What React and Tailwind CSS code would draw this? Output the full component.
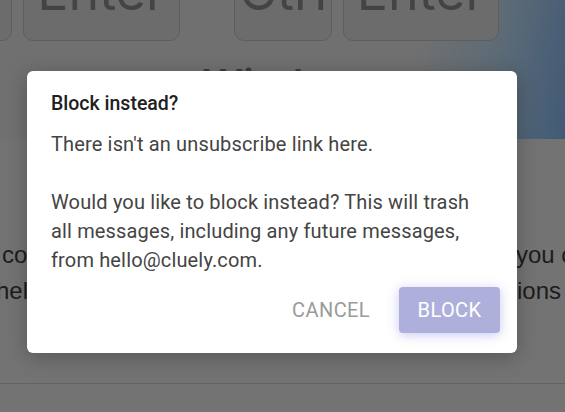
export default function App() {
  const font = { fontFamily: "Roboto, 'Noto Sans', sans-serif" };
  return (
    <div className="relative w-[565px] h-[412px] overflow-hidden bg-[#737373]" style={font}>
      {/* top band with keys */}
      <div className="flex flex-col h-[139px] bg-[linear-gradient(100deg,#707070_0%,#707070_72%,#5d6b76_86%,#415a76_100%)]">
        <div className="flex gap-[11px] -mt-[40px] -ml-[146px]">
          <Key w={158} label="" />
          <Key w={157} label="Enter" />
          <div className="w-[32px]" />
          <Key w={98} label="Ctrl" />
          <Key w={156} label="Enter" />
        </div>
        <div className="mt-[23px] text-center text-[40px] leading-none font-semibold text-[#3c3c3c] pl-[20px]" style={{ fontFamily: "Inter, sans-serif" }}>Windows</div>
      </div>
      {/* middle text */}
      <div className="pt-[98px] text-[24px] leading-[36px] text-[#1c1c1c] whitespace-nowrap" style={{ fontFamily: "'Liberation Sans', Arial, sans-serif" }}>
        <div className="grid grid-cols-[517px_1fr] overflow-hidden">
          <span className="pl-[2px] overflow-hidden">control your inbox</span>
          <span className="-ml-[1px] overflow-hidden">you can</span>
        </div>
        <div className="grid grid-cols-[517px_1fr] overflow-hidden">
          <span className="-ml-[4px] overflow-hidden">help you</span>
          <span className="overflow-hidden">ions</span>
        </div>
      </div>
      <div className="absolute left-0 right-0 top-[383px] h-px bg-[#626262]" />

      {/* dialog */}
      <div className="absolute left-[27px] top-[71px] w-[490px] h-[282px] bg-white rounded-[6px] shadow-[0_4px_20px_rgba(0,0,0,0.25)] flex flex-col pl-[24px] pr-[34px] pt-[20px]">
        <div className="text-[19.5px] leading-[26px] font-medium text-[#202020]">Block instead?</div>
        <div className="mt-[13px] text-[20px] leading-[29px] tracking-[0.15px] text-[#444444]">
          There isn't an unsubscribe link here.
          <br />
          <br />
          Would you like to block instead? This will trash all messages, including any future messages, from hello@cluely.com.
        </div>
        <div className="flex justify-end items-center gap-[29px] mt-[12px] -mr-[17px]">
          <span className="text-[20px] text-[#9a9a9a] tracking-[0.4px]">CANCEL</span>
          <div className="w-[101px] h-[46px] rounded-[4px] bg-[#aeb0db] shadow-[0_2px_12px_rgba(120,120,220,0.4)] flex items-center justify-center text-[20px] text-white tracking-[0.4px]">BLOCK</div>
        </div>
      </div>
    </div>
  );
}

function Key({ w, label }) {
  return (
    <div
      className="h-[81px] rounded-[10px] border border-[#5e5e5e] bg-[#6c6c6c] flex items-end justify-center pb-[22px] text-[52px] leading-none text-[#444444] overflow-hidden"
      style={{ width: w, fontFamily: "Inter, sans-serif" }}
    >
      {label}
    </div>
  );
}
